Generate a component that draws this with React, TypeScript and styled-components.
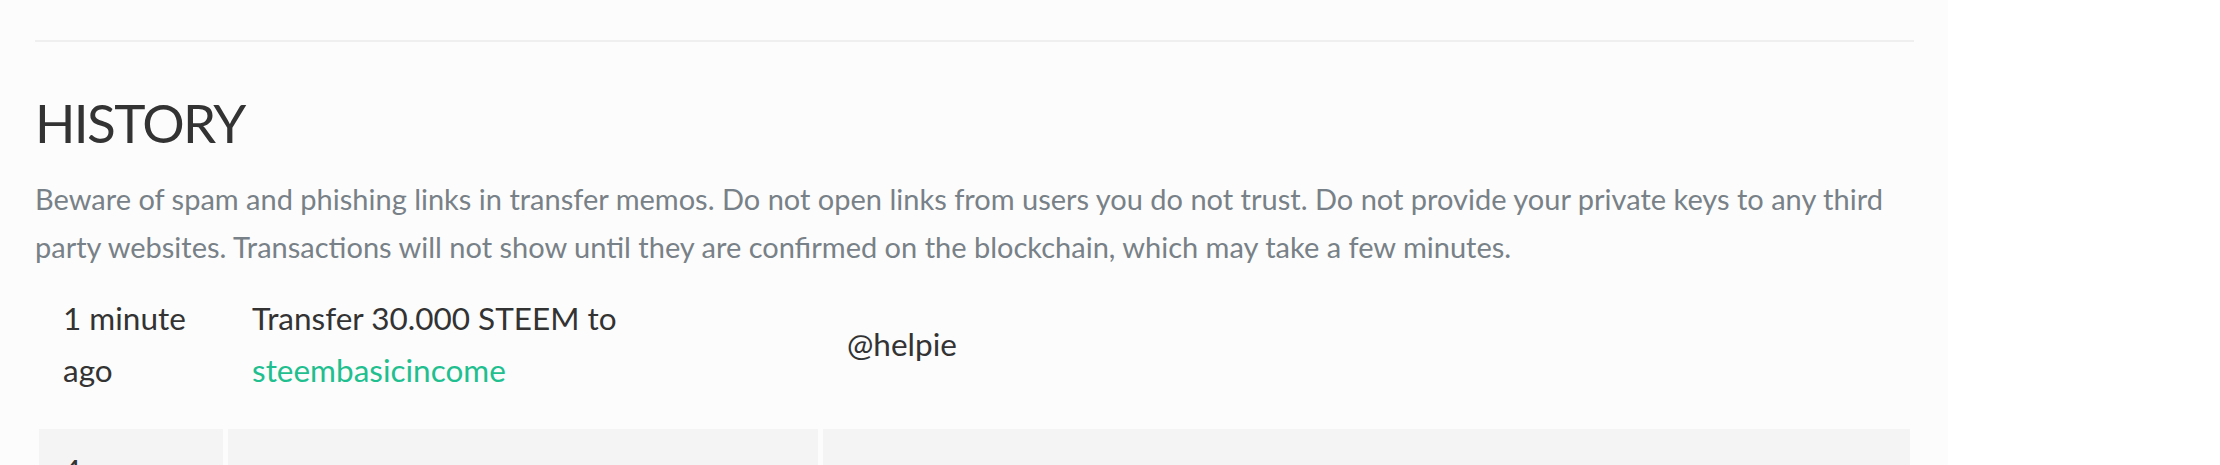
import React from "react";
import styled, { createGlobalStyle } from "styled-components";

const GlobalStyle = createGlobalStyle`
    html,
    body {
        margin: 0;
        padding: 0;
        background: #ffffff;
    }

    body {
        font-family: Lato, "Noto Sans", sans-serif;
        color: #333333;
    }
`;

const Page = styled.div`
    box-sizing: border-box;
    width: 1948px;
    min-height: 465px;
    padding: 40px 34px 0 35px;

    background: #fcfcfc;
`;

const Divider = styled.hr`
    height: 2px;
    margin: 0;

    border: none;
    background: #efefef;
`;

const Title = styled.h2`
    margin: 48.7px 0 0;

    font-size: 53px;
    font-weight: 400;
    line-height: 64.8px;
    letter-spacing: -1.6px;
    color: #333333;
`;

const Notice = styled.p`
    margin: 19.7px 0 0;

    font-size: 29px;
    line-height: 48px;
    color: #788187;
`;

const List = styled.div`
    display: flex;
    flex-direction: column;
    gap: 18px;

    margin-top: 5.8px;
    padding: 0 4px;
`;

const Row = styled.div<{ $striped?: boolean }>`
    display: grid;
    grid-template-columns: 184px 590px 1fr;
    column-gap: 5px;

    & > div {
        background: ${p => (p.$striped ? "#f4f4f4" : "transparent")};
    }
`;

const Cell = styled.div`
    display: flex;
    align-items: center;

    padding: 15px 28px 15px 24px;

    font-size: 31.5px;
    line-height: 52px;
    color: #333333;
`;

const Link = styled.a`
    color: #1fbf8f;
    text-decoration: none;
`;

type Entry = {
    when: string;
    what: React.ReactNode;
    who: string;
};

const entries: Entry[] = [
    {
        when: "1 minute ago",
        what: (
            <>
                Transfer 30.000 STEEM to <Link href="#">steembasicincome</Link>
            </>
        ),
        who: "@helpie"
    },
    {
        when: "4 minutes ago",
        what: "Claim rewards: 0.013 STEEM POWER",
        who: ""
    }
];

export default function App() {
    return (
        <>
            <GlobalStyle />
            <Page>
                <Divider />
                <Title>HISTORY</Title>
                <Notice>
                    Beware of spam and phishing links in transfer memos. Do not open links from users you do not trust. Do
                    not provide your private keys to any third party websites. Transactions will not show until they are
                    confirmed on the blockchain, which may take a few minutes.
                </Notice>
                <List>
                    {entries.map((e, i) => (
                        <Row key={i} $striped={i % 2 === 1}>
                            <Cell>
                                <span>{e.when}</span>
                            </Cell>
                            <Cell>
                                <span>{e.what}</span>
                            </Cell>
                            <Cell>
                                <span>{e.who}</span>
                            </Cell>
                        </Row>
                    ))}
                </List>
            </Page>
        </>
    );
}
